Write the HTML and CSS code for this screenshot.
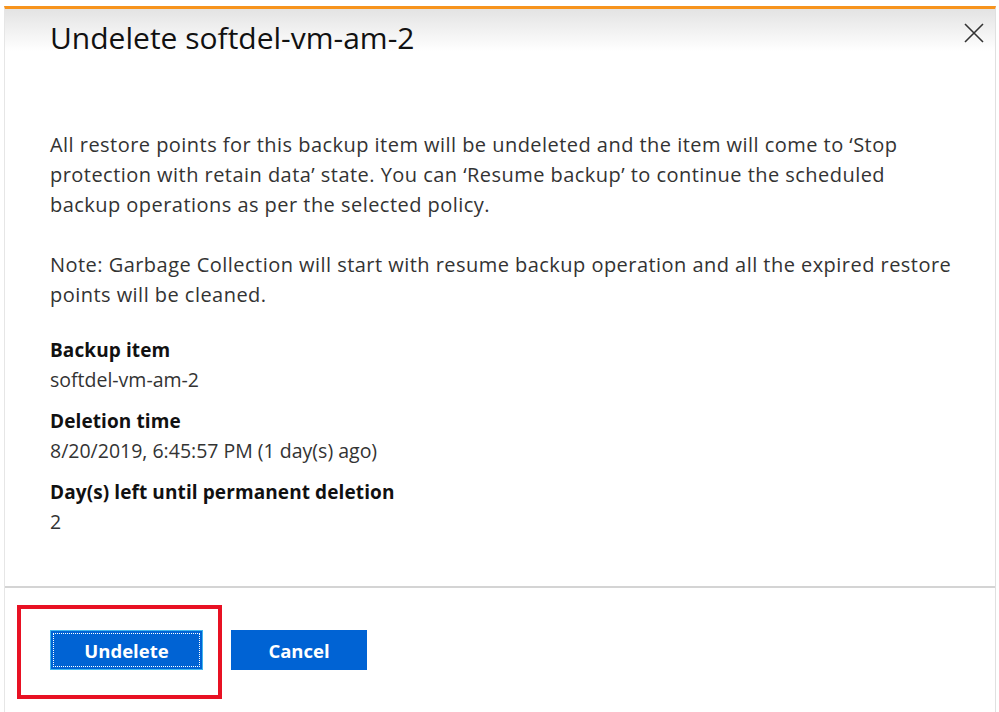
FILE: index.html
```html
<!DOCTYPE html>
<html lang="en">
<head>
    <meta charset="UTF-8">
    <title>Undelete softdel-vm-am-2</title>
    <link rel="stylesheet" href="styles.css">
</head>
<body>
    <div class="blade">
        <div class="blade-header">
            <h1>Undelete softdel-vm-am-2</h1>
            <button class="close" aria-label="Close">
                <svg width="20" height="20" viewBox="0 0 20 20"><path d="M1 1L19 19M19 1L1 19" stroke="#333" stroke-width="1.6" fill="none"/></svg>
            </button>
        </div>

        <div class="blade-content">
            <p>All restore points for this backup item will be undeleted and the item will come to ‘Stop protection with retain data’ state. You can ‘Resume backup’ to continue the scheduled backup operations as per the selected policy.</p>
            <p>Note: Garbage Collection will start with resume backup operation and all the expired restore points will be cleaned.</p>

            <dl class="details">
                <dt>Backup item</dt>
                <dd>softdel-vm-am-2</dd>
                <dt>Deletion time</dt>
                <dd>8/20/2019, 6:45:57 PM (1 day(s) ago)</dd>
                <dt>Day(s) left until permanent deletion</dt>
                <dd>2</dd>
            </dl>
        </div>

        <div class="blade-footer">
            <button class="btn focused">Undelete</button>
            <button class="btn">Cancel</button>
            <div class="highlight"></div>
        </div>
    </div>
</body>
</html>
```

FILE: styles.css
```css
* { margin: 0; padding: 0; box-sizing: border-box; }
body { font-family: "Open Sans", "Noto Sans", sans-serif; background: #fff; color: #262626; }
.blade { margin: 6px 3px 0 4px; height: 706px; border-top: 3px solid #f7941d; border-left: 1px solid #e6e6e6; border-right: 1px solid #e0e0e0; display: flex; flex-direction: column; }
.blade-header { display: flex; justify-content: space-between; align-items: flex-start; height: 121px; padding: 9px 11px 0 45px; background: linear-gradient(#e3e3e3, #fff 42px); }
h1 { font-size: 30px; font-weight: 400; color: #111; line-height: 40px; }
.close { background: none; border: none; margin-top: 5px; }
.blade-content { flex: 1; padding: 0 41px 0 45px; font-size: 20px; line-height: 30px; letter-spacing: 0.46px; }
.blade-content p { margin-bottom: 30px; color: #333; }
.blade-content p + p { margin-bottom: 25px; }
.details { letter-spacing: 0; }
.details dt { font-weight: 700; color: #111; font-size: 19px; letter-spacing: 0.1px; }
.details dd { margin-bottom: 11px; color: #333; font-size: 19.5px; }
.blade-footer { position: relative; border-top: 2px solid #d4d4d4; height: 126px; padding: 42px 0 0 45px; display: flex; align-items: flex-start; gap: 28px; }
.btn { background: #0063d4; color: #fff; border: none; height: 40px; font-family: inherit; font-size: 18.5px; font-weight: 700; }
.btn:first-child { width: 153px; }
.btn:nth-child(2) { width: 136px; }
.focused { border: 1px solid #3fb6ef; outline: 1.5px dotted #fff; outline-offset: -4px; }
.highlight { position: absolute; left: 12px; top: 17px; width: 205px; height: 94px; border: 4px solid #e81123; }
```
